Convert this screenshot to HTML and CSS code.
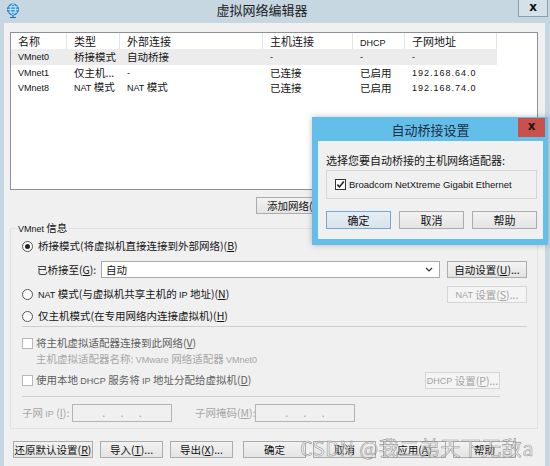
FILE: index.html
```html
<!DOCTYPE html>
<html lang="zh-CN">
<head>
<meta charset="utf-8">
<title>虚拟网络编辑器</title>
<link rel="stylesheet" href="styles.css">
</head>
<body>
<div class="window">
  <div class="titlebar">
    <svg class="app-icon" width="14" height="16" viewBox="0 0 14 16">
      <circle cx="7" cy="6.5" r="5.5" fill="#3aa2e2" stroke="#1a6fb5" stroke-width="1"/>
      <ellipse cx="7" cy="6.5" rx="2.4" ry="5.5" fill="none" stroke="#e8f4fc" stroke-width="0.8"/>
      <path d="M1.5 6.5h11M2.6 3.8h8.8M2.6 9.2h8.8" stroke="#e8f4fc" stroke-width="0.8"/>
      <path d="M7 12v2.2M4 14.5h6" stroke="#1a6fb5" stroke-width="1.2"/>
    </svg>
    <div class="title">虚拟网络编辑器</div>
    <div class="win-close">x</div>
  </div>
  <div class="client">
    <div class="list">
      <div class="row head">
        <div class="cell">名称</div><div class="cell">类型</div><div class="cell">外部连接</div><div class="cell">主机连接</div><div class="cell"><span class="en">DHCP</span></div><div class="cell">子网地址</div>
      </div>
      <div class="row sel">
        <div class="cell"><span class="en">VMnet0</span></div><div class="cell">桥接模式</div><div class="cell">自动桥接</div><div class="cell"><span class="en">-</span></div><div class="cell"><span class="en">-</span></div><div class="cell"><span class="en">-</span></div>
      </div>
      <div class="row">
        <div class="cell"><span class="en">VMnet1</span></div><div class="cell">仅主机...</div><div class="cell"><span class="en">-</span></div><div class="cell">已连接</div><div class="cell">已启用</div><div class="cell"><span class="en ip">192.168.64.0</span></div>
      </div>
      <div class="row">
        <div class="cell"><span class="en">VMnet8</span></div><div class="cell"><span class="en">NAT</span> 模式</div><div class="cell"><span class="en">NAT</span> 模式</div><div class="cell">已连接</div><div class="cell">已启用</div><div class="cell"><span class="en ip">192.168.74.0</span></div>
      </div>
    </div>
    <div class="actions">
      <div class="btn w-add">添加网络(<u>E</u>)...</div>
      <div class="btn w-del">移除网络(<u>O</u>)</div>
      <div class="btn w-ren">重命名网络(<u>W</u>)...</div>
    </div>
    <fieldset class="group">
      <legend><span class="en">VMnet</span> 信息</legend>
      <div class="opt r1"><span class="radio on"></span><span>桥接模式(将虚拟机直接连接到外部网络)(<u>B</u>)</span></div>
      <div class="bridge-row">
        <span class="lbl">已桥接至(<u>G</u>):</span>
        <div class="select"><span>自动</span>
          <svg width="8" height="5" viewBox="0 0 8 5"><path d="M1 1l3 3 3-3" fill="none" stroke="#333" stroke-width="1.2"/></svg>
        </div>
        <div class="btn w-auto">自动设置(<u>U</u>)...</div>
      </div>
      <div class="opt nat"><span class="radio"></span><span><span class="en">NAT</span> 模式(与虚拟机共享主机的 <span class="en">IP</span> 地址)(<u>N</u>)</span>
        <div class="btn disabled w-auto push"><span class="en">NAT</span>&nbsp;设置(<u>S</u>)...</div>
      </div>
      <div class="opt host"><span class="radio"></span><span>仅主机模式(在专用网络内连接虚拟机)(<u>H</u>)</span></div>
      <div class="sep"></div>
      <div class="opt chk1 dim"><span class="check"></span><span>将主机虚拟适配器连接到此网络(<u>V</u>)</span></div>
      <div class="adapter">主机虚拟适配器名称: <span class="en">VMware</span> 网络适配器 <span class="en">VMnet0</span></div>
      <div class="opt dhcp dim"><span class="check"></span><span>使用本地 <span class="en">DHCP</span> 服务将 <span class="en">IP</span> 地址分配给虚拟机(<u>D</u>)</span>
        <div class="btn disabled w-dhcp push"><span class="en">DHCP</span>&nbsp;设置(<u>P</u>)...</div>
      </div>
      <div class="sep short"></div>
      <div class="subnet">
        <span class="slbl">子网 <span class="en">IP</span> (<u>I</u>):</span>
        <div class="ipbox"><span>.</span><span>.</span><span>.</span></div>
        <span class="slbl mask">子网掩码(<u>M</u>):</span>
        <div class="ipbox"><span>.</span><span>.</span><span>.</span></div>
      </div>
    </fieldset>
    <div class="footer">
      <div class="btn f80">还原默认设置(<u>R</u>)</div>
      <div class="btn f63">导入(<u>T</u>)...</div>
      <div class="btn f63">导出(<u>X</u>)...</div>
      <div class="btn f63 gap-big">确定</div>
      <div class="btn f63">取消</div>
      <div class="btn f63">应用(<u>A</u>)</div>
      <div class="btn f63">帮助</div>
    </div>
  </div>

  <div class="dialog">
    <div class="dlg-title">自动桥接设置</div>
    <div class="dlg-close">x</div>
    <div class="dlg-body">
      <div class="dlg-text">选择您要自动桥接的主机网络适配器:</div>
      <div class="dlg-box">
        <span class="check checked">
          <svg width="9" height="9" viewBox="0 0 9 9"><path d="M1.3 4.6l2.2 2.3 4.3-5.4" fill="none" stroke="#222" stroke-width="1.6"/></svg>
        </span>
        <span class="en adapter-name">Broadcom NetXtreme Gigabit Ethernet</span>
      </div>
      <div class="dlg-btns">
        <div class="btn dflt">确定</div>
        <div class="btn">取消</div>
        <div class="btn">帮助</div>
      </div>
    </div>
  </div>

  <div class="watermark">CSDN @我二弟天下无敌a</div>
</div>
</body>
</html>
```
FILE: styles.css
```css
* { box-sizing: border-box; }
html, body { margin: 0; padding: 0; }
body {
  width: 550px;
  height: 466px;
  overflow: hidden;
  background: #c6d7e2;
  font-family: "Noto Sans CJK SC", "Liberation Sans", sans-serif;
  font-size: 10.5px;
  line-height: 14px;
  color: #141414;
}
u { text-decoration: underline; text-underline-offset: 1px; }
.en {
  font-family: "Liberation Sans", "DejaVu Sans", sans-serif;
  font-size: 9px;
}

.window {
  position: relative;
  width: 550px;
  height: 466px;
  display: flex;
  flex-direction: column;
}

/* title bar */
.titlebar {
  height: 23px;
  display: flex;
  align-items: flex-start;
  flex: none;
}
.app-icon { margin: 3px 0 0 6px; flex: none; }
.title {
  flex: 1;
  text-align: center;
  font-size: 13px;
  line-height: 20px;
  color: #222;
  padding-right: 14px;
}
.win-close {
  width: 30px;
  height: 17px;
  margin-right: 2px;
  border: 1px solid #8e9ea8;
  border-top: none;
  background: #d4e1e9;
  text-align: center;
  font-family: "DejaVu Sans", sans-serif;
  font-weight: bold;
  font-size: 12px;
  line-height: 14px;
  color: #111;
}

/* client area */
.client {
  flex: 1;
  margin: 0 5px 0 4px;
  background: #f0f0f0;
  padding: 9px 7px 0 6px;
  display: flex;
  flex-direction: column;
}

.list {
  height: 158px;
  background: #fff;
  border: 1px solid #8c9199;
  flex: none;
}
.row {
  display: grid;
  grid-template-columns: 56px 53px 143px 90px 52px 92px;
  width: max-content;
  height: 15.5px;
  align-items: center;
}
.row.head { height: 16px; }
.cell { padding-left: 7px; white-space: nowrap; overflow: hidden; line-height: 15px; }
.head .cell { border-right: 1px solid #e3e3e3; height: 16px; line-height: 16px; font-size: 11px; }
.sel { background: #ececec; }
.ip { letter-spacing: 1px; }

.actions {
  display: flex;
  justify-content: flex-end;
  gap: 8px;
  margin-top: 7px;
  flex: none;
}

.btn {
  height: 17px;
  border: 1px solid #acacac;
  background: linear-gradient(#f2f2f2, #e4e4e4);
  display: flex;
  align-items: center;
  justify-content: center;
  white-space: nowrap;
  color: #111;
  flex: none;
}
.btn.disabled { border-color: #d5d5d5; background: #f4f4f4; color: #a3a3a3; }
.w-add { width: 86px; }
.w-del { width: 80px; }
.w-ren { width: 100px; }
.w-auto { width: 80px; }
.w-dhcp { width: 75px; margin-right: 27px; }

/* group */
.group {
  margin: 7px 0 0 0;
  padding: 2px 10px 6px 11px;
  border: 1px solid #e2e2e2;
  min-width: 0;
  flex: none;
}
.group legend {
  padding: 0 1px;
  margin-left: -5px;
  line-height: 14px;
}

.opt {
  display: flex;
  align-items: center;
  height: 16px;
  gap: 5px;
  white-space: nowrap;
}
.radio {
  width: 11px;
  height: 11px;
  border: 1px solid #555;
  border-radius: 50%;
  background: #fff;
  flex: none;
  display: flex;
  align-items: center;
  justify-content: center;
}
.radio.on::after {
  content: "";
  width: 5px;
  height: 5px;
  border-radius: 50%;
  background: #222;
}
.check {
  width: 11px;
  height: 11px;
  border: 1px solid #b8b8b8;
  background: #fff;
  flex: none;
  display: flex;
  align-items: center;
  justify-content: center;
}
.opt.dim { gap: 3px; color: #5e5e5e; }

.bridge-row {
  display: flex;
  align-items: center;
  height: 17px;
  margin-top: 7px;
  padding-left: 15px;
}
.lbl { width: 64px; flex: none; white-space: nowrap; }
.select {
  flex: 1;
  height: 17px;
  border: 1px solid #a9a9a9;
  background: #fff;
  display: flex;
  align-items: center;
  justify-content: space-between;
  padding: 0 6px 0 4px;
  margin-right: 7px;
}

.opt.nat { height: 17px; margin-top: 8px; }
.push { margin-left: auto; }
.opt.host { margin-top: 5px; }

.sep { border-top: 1px solid #cfcfcf; margin-top: 2px; height: 0; }
.sep.short { margin-top: 7px; margin-right: 27px; }

.opt.chk1 { margin-top: 8px; }
.adapter { height: 16px; line-height: 16px; padding-left: 14px; color: #a6a6a6; white-space: nowrap; }
.opt.dhcp { height: 17px; margin-top: 5px; }

.subnet {
  display: flex;
  align-items: center;
  height: 18px;
  margin-top: 7px;
  color: #a6a6a6;
  white-space: nowrap;
}
.slbl { width: 50px; flex: none; }
.slbl.mask { width: 60px; margin-left: 23px; }
.ipbox {
  width: 100px;
  height: 18px;
  border: 1px solid #b4b4b4;
  background: #f0f0f0;
  display: flex;
  justify-content: space-evenly;
  align-items: center;
  padding: 0 14px;
  color: #a0a0a0;
}

.footer {
  display: flex;
  gap: 7px;
  margin-top: 12px;
  padding-left: 3px;
}
.f80 { width: 80px; }
.f63 { width: 63px; }
.gap-big { margin-left: 3px; }

/* dialog */
.dialog {
  position: absolute;
  left: 312px;
  top: 117px;
  width: 236px;
  height: 128px;
  background: #63bfea;
  display: flex;
  flex-direction: column;
  padding: 0 5px 6px 6px;
  box-shadow: 0 0 6px rgba(0,0,0,0.25);
}
.dlg-title {
  height: 24px;
  line-height: 26px;
  text-align: center;
  font-size: 13px;
  color: #1c2f44;
  flex: none;
}
.dlg-close {
  position: absolute;
  right: 3px;
  top: 1px;
  width: 27px;
  height: 19px;
  background: #c9504b;
  text-align: center;
  font-family: "DejaVu Sans", sans-serif;
  font-weight: bold;
  font-size: 12px;
  line-height: 16px;
  color: #1a1a1a;
}
.dlg-body {
  flex: 1;
  background: #f0f0f0;
  padding: 12px 6px 0 8px;
  font-size: 11px;
}
.dlg-text { line-height: 14px; white-space: nowrap; }
.dlg-box {
  margin-top: 3px;
  height: 29px;
  border: 1px solid #d6d6d6;
  display: flex;
  align-items: center;
  gap: 3px;
  padding-left: 8px;
  white-space: nowrap;
}
.adapter-name { font-size: 9.5px; }
.check.checked { border-color: #333; }
.dlg-btns {
  display: flex;
  justify-content: space-between;
  margin-top: 12px;
}
.dlg-btns .btn { width: 65px; height: 18px; }
.btn.dflt { border-color: #7aa7d0; background: linear-gradient(#e6eef5, #d8e3ec); }

.watermark {
  position: absolute;
  left: 300px;
  top: 435px;
  font-size: 20px;
  line-height: 26px;
  color: rgba(245, 245, 245, 0.5);
  -webkit-text-stroke: 0.6px rgba(110, 110, 110, 0.7);
  white-space: nowrap;
  letter-spacing: 0.5px;
}
```
